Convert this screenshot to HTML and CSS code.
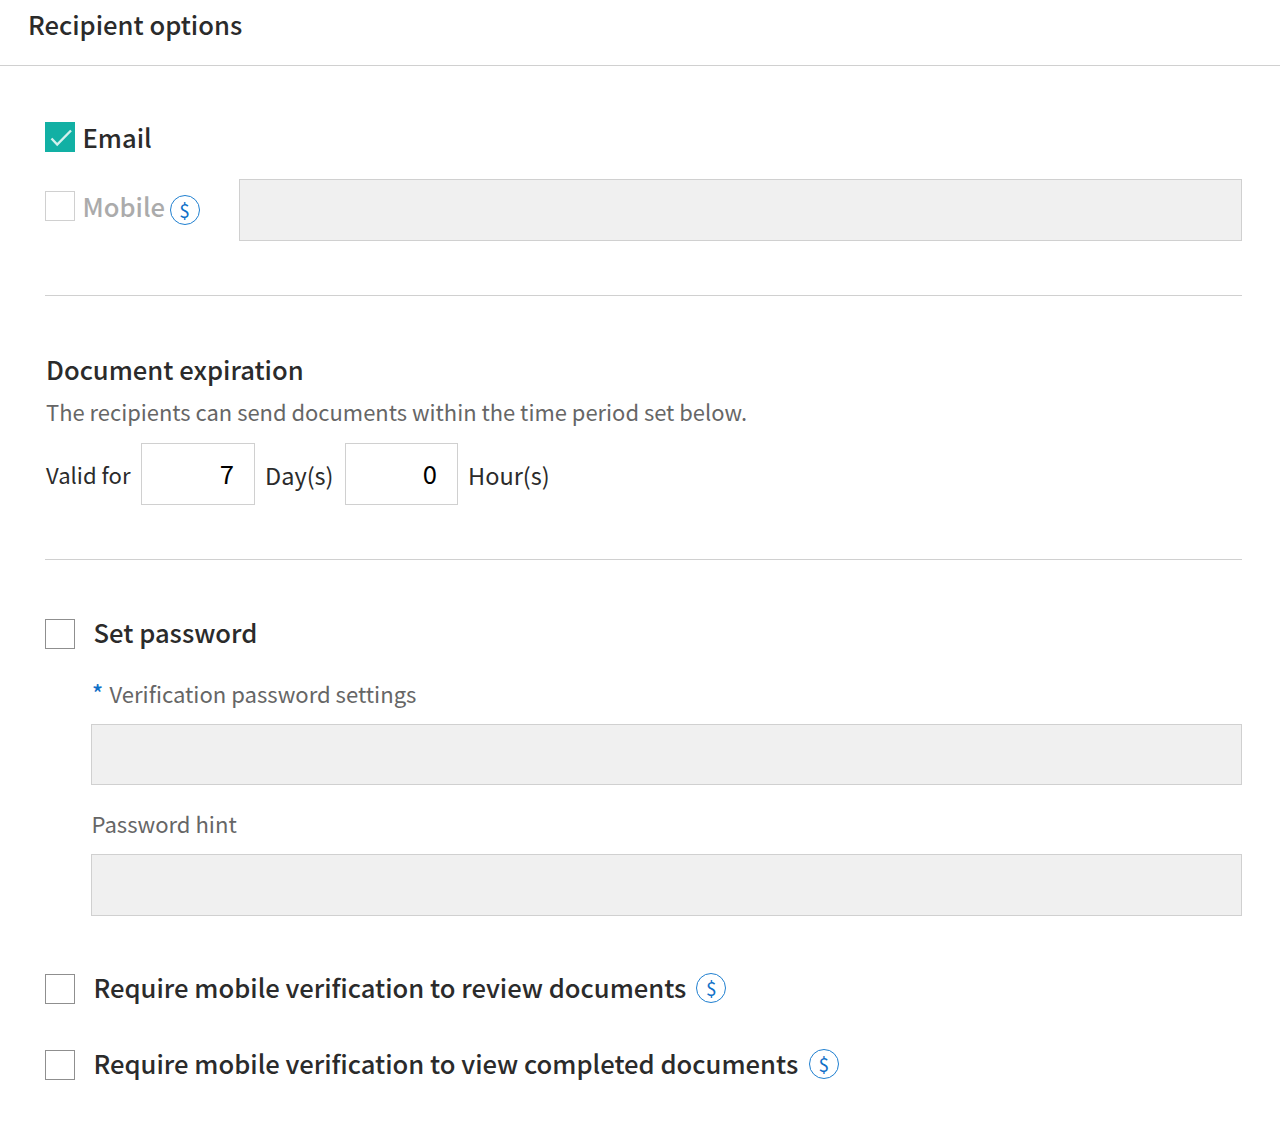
FILE: index.html
```html
<!DOCTYPE html>
<html lang="en">
<head>
<meta charset="utf-8">
<title>Recipient options</title>
<link rel="stylesheet" href="styles.css">
</head>
<body>
<header class="header"><h1 class="title">Recipient options</h1></header>
<main class="content">
  <section class="section contact">
    <div class="row email">
      <span class="box checked"><svg viewBox="0 0 30 30" width="30" height="30"><path d="M6.5 16.5 12.2 22.5 26 8.5" fill="none" stroke="#d3f1ee" stroke-width="2.4"/></svg></span>
      <span class="title">Email</span>
    </div>
    <div class="row mobile">
      <span class="box disabled"></span>
      <span class="title muted">Mobile</span>
      <span class="coin">$</span>
      <div class="field"></div>
    </div>
  </section>
  <section class="section expiry">
    <h2 class="title">Document expiration</h2>
    <p class="note">The recipients can send documents within the time period set below.</p>
    <div class="row period">
      <span class="text lead">Valid for</span>
      <div class="number days">7</div>
      <span class="text">Day(s)</span>
      <div class="number hours">0</div>
      <span class="text">Hour(s)</span>
    </div>
  </section>
  <section class="security">
    <div class="row option">
      <span class="box"></span>
      <h2 class="title">Set password</h2>
    </div>
    <div class="password">
      <div class="label"><span class="star">*</span><span class="note">Verification password settings</span></div>
      <div class="field first"></div>
      <div class="label hint"><span class="note">Password hint</span></div>
      <div class="field"></div>
    </div>
    <div class="row option review">
      <span class="box"></span>
      <h2 class="title">Require mobile verification to review documents</h2>
      <span class="coin">$</span>
    </div>
    <div class="row option view">
      <span class="box"></span>
      <h2 class="title">Require mobile verification to view completed documents</h2>
      <span class="coin">$</span>
    </div>
  </section>
</main>
</body>
</html>
```
FILE: styles.css
```css
* { box-sizing: border-box; }
body { margin: 0; background: #fff; color: #2b2b2b; font-family: "Noto Sans CJK KR", "Noto Sans", sans-serif; }
h1, h2, p { margin: 0; }
.header { height: 66px; padding: 4px 28px 0; border-bottom: 1px solid #d0d0d0; }
.title { font-size: 25.6px; line-height: 40px; font-weight: 500; white-space: nowrap; }
.muted { color: #ababab; }
.note { font-size: 22.08px; line-height: 34px; color: #666; white-space: nowrap; }
.text { font-size: 23.5px; line-height: 36px; white-space: nowrap; }
.text.lead { width: 84px; font-size: 22.1px; }
.content { padding: 0 38px 0 45px; }
.section { border-bottom: 1px solid #d0d0d0; }
.row { display: flex; }
.box { flex: none; width: 30px; height: 30px; border: 1px solid #8f8f8f; background: #fff; }
.box.checked { border: 0; background: #12b0a4; }
.box.checked svg { display: block; }
.box.disabled { border-color: #d0d0d0; }
.field { height: 62px; border: 1px solid #d0d0d0; background: #f0f0f0; }
.coin { flex: none; width: 30px; height: 30px; border: 1.4px solid #1f7fd0; border-radius: 50%; color: #1070c8; font-size: 19px; line-height: 28px; text-align: center; }
.contact { height: 230px; padding-top: 50px; }
.email { height: 63px; padding-top: 6px; gap: 7.5px; }
.email .title { margin-top: -5px; }
.mobile { height: 62px; }
.mobile .box { margin: 12px 7.5px 0 0; }
.mobile .title { width: 82px; margin-top: 7px; }
.mobile .coin { margin: 15.5px 0 0 5px; }
.mobile .field { width: 1003px; margin-left: auto; }
.expiry { height: 264px; padding: 53px 0 0 1px; }
.expiry .note { margin-top: 6px; font-size: 21.94px; }
.period { margin-top: 14px; }
.period .text { margin-top: 14px; }
.period .lead { margin-top: 13px; }
.number { width: 113px; height: 62px; padding-right: 20px; border: 1px solid #d0d0d0; color: #000; font-size: 25.6px; line-height: 58px; text-align: right; }
.days { width: 114px; margin: 0 10px 0 11px; }
.hours { width: 113px; margin: 0 10px 0 11.5px; }
.security { padding-top: 52px; }
.option { height: 40px; }
.option .box { margin: 7px 18.5px 0 0; }
.option .coin { margin: 6px 0 0 10px; }
.view .coin { margin-left: 10.5px; }
.password { padding: 24px 0 0 46px; }
.label { display: flex; }
.star { width: 18.5px; padding-left: 1px; color: #1070c8; font-size: 23px; font-weight: 500; line-height: 32px; }
.first { height: 61px; margin-top: 14px; }
.hint { margin-top: 21px; padding-left: .5px; }
.hint + .field { margin-top: 14px; }
.review { margin-top: 51px; }
.view { margin-top: 36px; }
```
